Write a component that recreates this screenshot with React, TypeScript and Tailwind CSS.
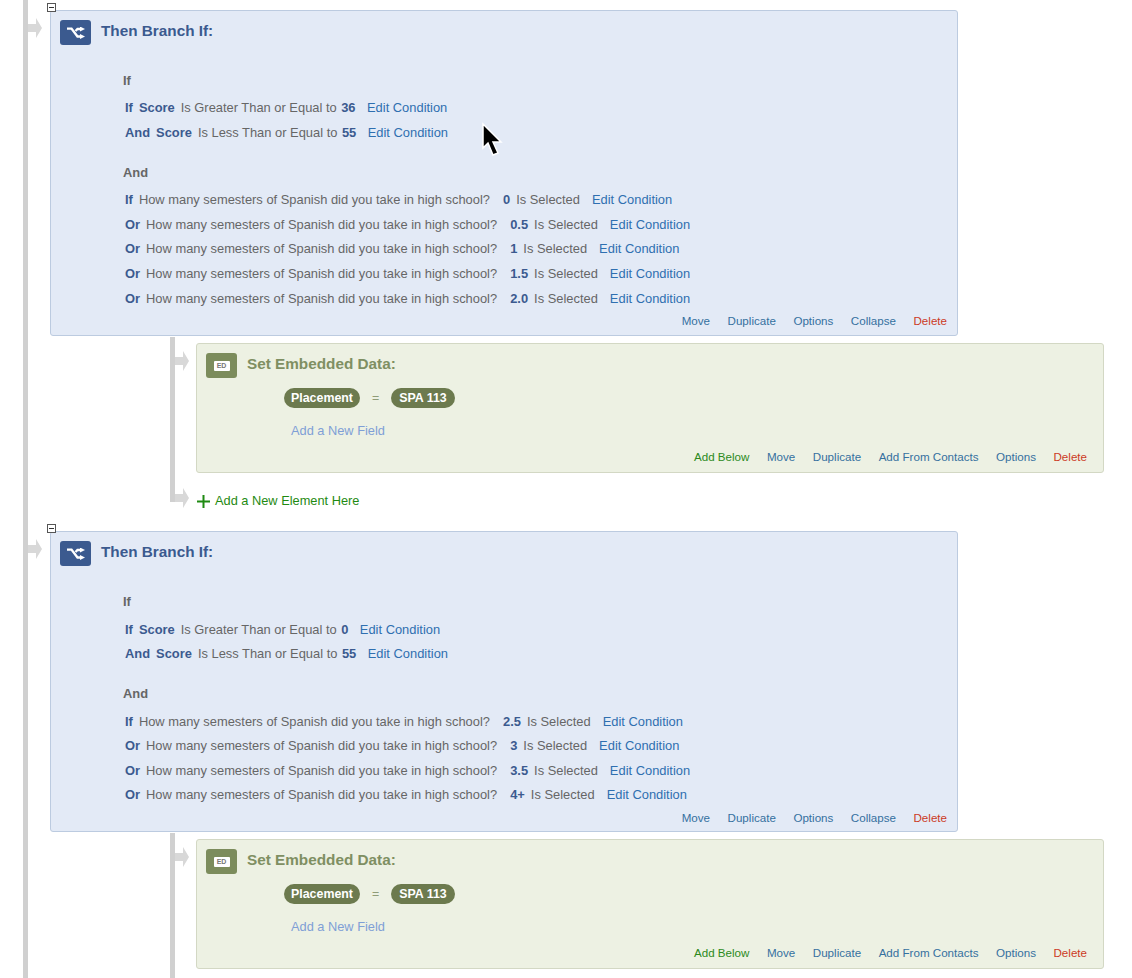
const F = { fontFamily: '"Liberation Sans", Arial, sans-serif' };

function RailArrow({ className }: { className: string }) {
  return (
    <svg className={`absolute ${className}`} width="14" height="20" viewBox="0 0 14 20">
      <path d="M0 6H8V0L14 10L8 20V14H0Z" fill="#d8d8d8" />
    </svg>
  );
}

function ShuffleIcon() {
  return (
    <svg width="18" height="12" viewBox="0 0 18 12" fill="none" stroke="#fff" strokeWidth="2.4">
      <path d="M0 1.6H4.5L10.5 9.5H14" />
      <path d="M8.5 4L10.5 2H14" />
      <path d="M13 -0.5L18 2L13 4.5Z" fill="#fff" strokeWidth="0" />
      <path d="M13 7L18 9.5L13 12Z" fill="#fff" strokeWidth="0" />
    </svg>
  );
}

function Link({ children }: { children: string }) {
  return <span className="text-[#35709f]">{children}</span>;
}

type Cond = { kw: string; pre: string; val: string; post: string };

function Row({ c, h }: { c: Cond; h: string }) {
  return (
    <div className={`flex items-center whitespace-nowrap pl-[74px] text-[12.9px] text-[#666] ${h}`}>
      <b className="mr-[6px] font-bold text-[#3b5a8f]">{c.kw}</b>
      {c.pre.startsWith("Score") ? (
        <>
          <b className="mr-[6px] font-bold text-[#3b5a8f]">Score</b>
          <span className="mr-[4.5px]">{c.pre.slice(6)}</span>
        </>
      ) : (
        <span className="mr-[13px]">{c.pre}</span>
      )}
      <b className="mr-[6px] font-bold text-[#3b5a8f]">{c.val}</b>
      {c.post && <span className="mr-[12px]">{c.post}</span>}
      {!c.post && <span className="mr-[5.5px]" />}
      <span className="text-[#2f6fb0]">Edit Condition</span>
    </div>
  );
}

const Q = "How many semesters of Spanish did you take in high school?";

function BlueCard({
  h,
  a,
  b,
  hA,
  hB,
  mtA,
  mtB,
}: {
  h: string;
  a: Cond[];
  b: Cond[];
  hA: string;
  hB: string;
  mtA: string;
  mtB: string;
}) {
  return (
    <div className={`relative flex w-[908px] flex-col rounded-[3px] border border-[#bccbe0] bg-[#e3eaf6] ${h}`}>
      <RailArrow className="left-[-23px] top-[7px]" />
      <div className="absolute left-[-4px] top-[-8px] flex h-[9px] w-[9px] items-center justify-center border border-[#555] bg-white">
        <div className="h-px w-[5px] bg-[#333]" />
      </div>
      <div className="flex h-[29px] items-start pl-[9px] pt-[9px]">
        <div className="flex h-[25px] w-[31px] items-center justify-center rounded-[3px] bg-[#3b5a8f]">
          <ShuffleIcon />
        </div>
        <div className="ml-[10px] text-[15.3px] font-bold leading-[22px] text-[#3b5a8f]">Then Branch If:</div>
      </div>
      <div className="mt-[32px] flex h-[18px] items-center pl-[72px] text-[12.9px] font-bold text-[#666]">If</div>
      <div className={mtA}>
        {a.map((c, i) => (
          <Row key={i} c={c} h={hA} />
        ))}
      </div>
      <div className="mt-[19px] flex h-[18px] items-center pl-[72px] text-[12.9px] font-bold text-[#666]">And</div>
      <div className={mtB}>
        {b.map((c, i) => (
          <Row key={i} c={c} h={hB} />
        ))}
      </div>
      <div className="flex h-[20px] items-center justify-end gap-[17.5px] pr-[10px] text-[11.6px]">
        <Link>Move</Link>
        <Link>Duplicate</Link>
        <Link>Options</Link>
        <Link>Collapse</Link>
        <span className="text-[#cc3a1f]">Delete</span>
      </div>
    </div>
  );
}

function GreenCard() {
  return (
    <div className="relative flex h-[130px] w-[908px] flex-col rounded-[3px] border border-[#d3d8c4] bg-[#edf1e3]">
      <RailArrow className="left-[-22px] top-[7px]" />
      <div className="flex items-start pl-[9px] pt-[9px]">
        <div className="flex h-[25px] w-[31px] items-center justify-center rounded-[3px] bg-[#7c8c5c]">
          <div className="flex h-[10px] w-[16px] items-center justify-center rounded-[1px] bg-white text-[7px] font-bold leading-none text-[#777]">
            ED
          </div>
        </div>
        <div className="ml-[10px] text-[15.3px] font-bold leading-[21px] text-[#7f8f62]">Set Embedded Data:</div>
      </div>
      <div className="mt-[10px] flex items-center pl-[87px] text-[12.4px] font-bold text-white">
        <span className="flex h-[20px] w-[76px] items-center justify-center rounded-full bg-[#6c7a4e]">Placement</span>
        <span className="w-[31px] text-center font-normal text-[#8f9c78]">=</span>
        <span className="flex h-[20px] w-[64px] items-center justify-center rounded-full bg-[#6c7a4e]">SPA 113</span>
      </div>
      <div className="mt-[14px] pl-[94px] text-[12.8px] leading-[18px] text-[#7f9fd6]">Add a New Field</div>
      <div className="mt-auto flex h-[30px] items-center justify-end gap-[17.5px] pr-[16px] text-[11.6px]">
        <span className="text-[#2c8a1c]">Add Below</span>
        <Link>Move</Link>
        <Link>Duplicate</Link>
        <Link>Add From Contacts</Link>
        <Link>Options</Link>
        <span className="text-[#cc3a1f]">Delete</span>
      </div>
    </div>
  );
}

const s = (kw: string, rest: string, val: string): Cond => ({ kw, pre: "Score " + rest, val, post: "" });
const q = (kw: string, val: string): Cond => ({ kw, pre: Q, val, post: "Is Selected" });

export default function App() {
  return (
    <div className="h-[978px] w-[1132px] overflow-hidden bg-white" style={F}>
      <div className="ml-[23px] flex h-full flex-col border-l-[5px] border-[#d0d0d0] pl-[22px] pt-[10px]">
        <BlueCard
          h="h-[326px]"
          hA="h-[25px]"
          hB="h-[24.75px]"
          mtA="mt-[5px]"
          mtB="mt-[5.3px]"
          a={[s("If", "Is Greater Than or Equal to", "36"), s("And", "Is Less Than or Equal to", "55")]}
          b={[q("If", "0"), q("Or", "0.5"), q("Or", "1"), q("Or", "1.5"), q("Or", "2.0")]}
        />
        <div className="relative ml-[120px] mt-[1px] flex h-[165px] flex-col border-l-[5px] border-[#d0d0d0] pl-[21px] pt-[6px]">
          <GreenCard />
          <RailArrow className="left-0 top-[151px]" />
        </div>
        <div className="ml-[147px] mt-[-11px] flex h-[20px] items-center text-[12.8px] text-[#1f8a12]">
          <svg width="13" height="13" viewBox="0 0 13 13" className="mr-[5px]">
            <path d="M6.5 0V13M0 6.5H13" stroke="#1f8a12" strokeWidth="2" />
          </svg>
          Add a New Element Here
        </div>
        <div className="mt-[20px]">
          <BlueCard
            h="h-[301px]"
            hA="h-[24.5px]"
            hB="h-[24.6px]"
            mtA="mt-[6px]"
            mtB="mt-[6px]"
            a={[s("If", "Is Greater Than or Equal to", "0"), s("And", "Is Less Than or Equal to", "55")]}
            b={[q("If", "2.5"), q("Or", "3"), q("Or", "3.5"), q("Or", "4+")]}
          />
        </div>
        <div className="relative ml-[120px] mt-[1px] flex flex-1 flex-col border-l-[5px] border-[#d0d0d0] pl-[21px] pt-[6px]">
          <GreenCard />
        </div>
      </div>
      <svg className="absolute left-[480px] top-[122px]" width="24" height="36" viewBox="0 0 24 36">
        <path d="M3 2V26L8 21L13 33L18 31L13 20H21Z" fill="#000" stroke="#fff" strokeWidth="1.5" />
      </svg>
    </div>
  );
}
